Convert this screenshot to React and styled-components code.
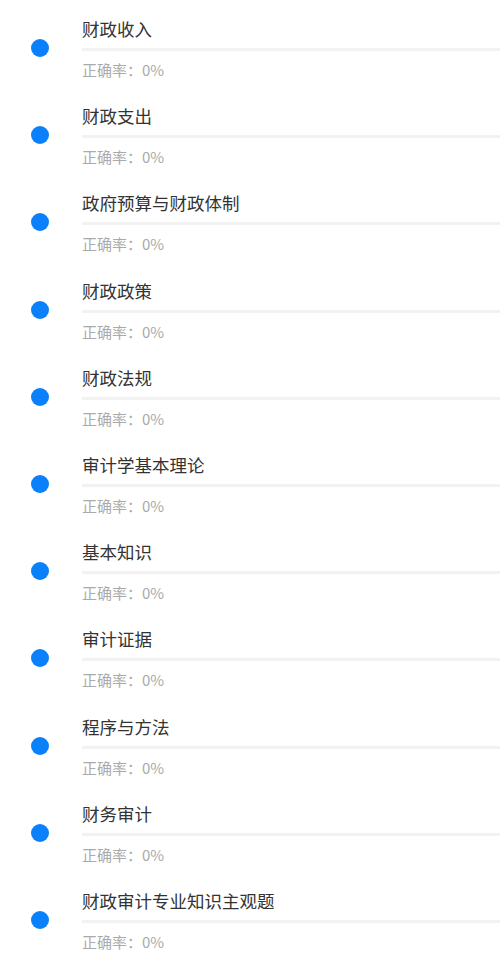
import React from "react";
import styled, { createGlobalStyle } from "styled-components";

const GlobalStyle = createGlobalStyle`
  body {
    margin: 0;
    background: #fff;
    font-family: "Noto Sans CJK SC", "Liberation Sans", sans-serif;
  }
`;

const List = styled.div`
  display: flex;
  flex-direction: column;
`;

const Row = styled.div`
  display: flex;
  align-items: flex-start;
  height: 87.2px;
  box-sizing: border-box;
  padding-top: 18px;
`;

const Dot = styled.span`
  flex: none;
  width: 18px;
  height: 18px;
  border-radius: 50%;
  background: #0a80fa;
  margin: 21px 0 0 31px;
`;

const Body = styled.div`
  flex: 1;
  margin-left: 33px;
  display: flex;
  flex-direction: column;
`;

const Title = styled.div`
  font-size: 17.5px;
  line-height: 22px;
  color: #333;
`;

const Bar = styled.div`
  height: 3px;
  margin-top: 8px;
  background: #f2f2f2;
`;

const Rate = styled.div`
  margin-top: 9px;
  font-size: 15px;
  line-height: 20px;
  color: #aaa;
`;

const items = [
  "财政收入",
  "财政支出",
  "政府预算与财政体制",
  "财政政策",
  "财政法规",
  "审计学基本理论",
  "基本知识",
  "审计证据",
  "程序与方法",
  "财务审计",
  "财政审计专业知识主观题",
];

export default function App() {
  return (
    <>
      <GlobalStyle />
      <List>
        {items.map((name) => (
          <Row key={name}>
            <Dot />
            <Body>
              <Title>{name}</Title>
              <Bar />
              <Rate>正确率：0%</Rate>
            </Body>
          </Row>
        ))}
      </List>
    </>
  );
}
